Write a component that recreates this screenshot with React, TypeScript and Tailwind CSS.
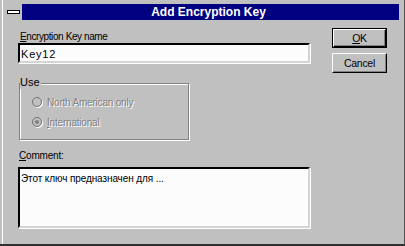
import React from 'react';

const font = "font-['Liberation_Sans',Arial,sans-serif]";

// Win95-style sunken text field
const Field: React.FC<{ h: string; children: React.ReactNode }> = ({ h, children }) => (
  <div
    className={`${h} w-[292px] bg-[#fcfcfc] border-2 border-t-black border-l-black border-b-[#d4d4d4] border-r-[#d4d4d4] shadow-[1px_1px_0_#fff] px-[1px] leading-[16px] text-black`}
  >
    {children}
  </div>
);

const Radio: React.FC<{ checked?: boolean; label: React.ReactNode }> = ({ checked, label }) => (
  <div className="h-[20px] flex items-center pl-[12px] gap-[5px]">
    <div className="w-[10px] h-[10px] rounded-full border border-[#707070] shadow-[1px_1px_0_#fff] flex items-center justify-center">
      {checked && <div className="w-[4px] h-[4px] rounded-full bg-[#808080]" />}
    </div>
    <span className="text-[10px] tracking-[-0.2px] leading-[13px] text-[#808080] [text-shadow:1px_1px_0_#fff]">{label}</span>
  </div>
);

const Button: React.FC<{ isDefault?: boolean; children: React.ReactNode }> = ({ isDefault, children }) => (
  <div className={`w-[55px] h-[20px] ${isDefault ? 'border border-black' : ''}`}>
    <div className="w-full h-full bg-[#c0c0c0] border border-t-white border-l-white border-b-black border-r-black shadow-[inset_-1px_-1px_0_#808080] flex items-center justify-center text-[10.5px] tracking-[-0.3px] leading-[13px] text-black">
      {children}
    </div>
  </div>
);

export default function App() {
  return (
    <div
      className={`${font} w-[405px] h-[246px] bg-[#c0c0c0] border-b-2 border-b-[#303030] border-r border-r-[#505050] shadow-[inset_2px_0_0_#c0c0c0,inset_3px_0_0_#fff] pt-[4px] px-[5px] flex flex-col overflow-hidden`}
    >
      {/* Title bar */}
      <div className="h-[16px] flex shrink-0">
        <div className="w-[17px] h-full bg-[#c0c0c0] flex items-center justify-center">
          <div className="w-[13px] h-[4px] bg-white border border-black" />
        </div>
        <div className="flex-1 bg-[#000080] flex items-center justify-center text-white font-bold text-[12px] leading-[16px] pr-[4px]">
          Add Encryption Key
        </div>
      </div>

      <div className="flex pt-[8px] pl-[13px]">
        {/* Left column */}
        <div className="flex flex-col pt-[2px] w-[292px]">
          <div className="h-[13px] text-[10px] tracking-[-0.4px] leading-[13px] text-black pl-[2px]">
            <span className="underline">E</span>ncryption Key name
          </div>
          <Field h="h-[20px]">
            <span className="text-[11px] tracking-[0.8px]">Key12</span>
          </Field>

          <div className="relative mt-[20px] ml-[1px] w-[170px] h-[57px] border border-[#808080] shadow-[1px_1px_0_#fff,inset_1px_1px_0_#fff] pt-[8px]">
            <span className="absolute left-[0px] top-[-8px] bg-[#c0c0c0] pr-[1px] text-[11px] leading-[13px] text-black">
              Use
            </span>
            <Radio label="North American only" />
            <Radio checked label={<><span className="underline">I</span>nternational</>} />
          </div>

          <div className="mt-[9px] h-[13px] text-[10px] tracking-[-0.2px] leading-[13px] text-black pl-[1px]">
            <span className="underline">C</span>omment:
          </div>
          <div className="mt-[5px]">
            <Field h="h-[61px]">
              <span className="text-[10px] tracking-[-0.1px]">Этот ключ предназначен для ...</span>
            </Field>
          </div>
        </div>

        {/* Buttons */}
        <div className="ml-[22px] flex flex-col gap-[5px]">
          <Button isDefault>
            <span className="underline">O</span>K
          </Button>
          <Button>Cancel</Button>
        </div>
      </div>
    </div>
  );
}
